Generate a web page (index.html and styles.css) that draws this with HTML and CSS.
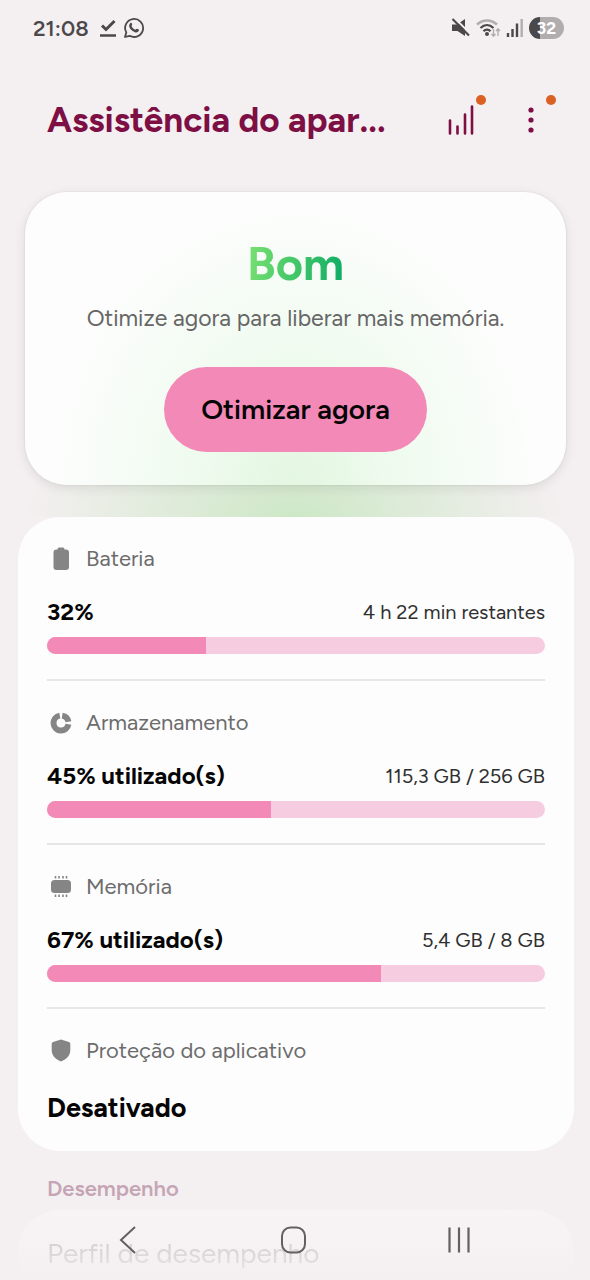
FILE: index.html
```html
<!DOCTYPE html>
<html lang="pt-BR">
<head>
<meta charset="utf-8">
<meta name="viewport" content="width=device-width, initial-scale=1">
<title>Assistência do aparelho</title>
<link rel="stylesheet" href="styles.css">
</head>
<body>
<div class="status">
  <div class="status-group">
    <span class="clock">21:08</span>
    <svg width="18" height="20" viewBox="0 0 18 20" fill="none" stroke="#4b484a"><path d="M3 7.500l4 4L15.500 3" stroke-width="3"/><path d="M1 17.500h16" stroke-width="2.500"/></svg>
    <svg width="22" height="22" viewBox="0 0 22 22" fill="none" stroke="#4b484a"><path d="M2 20l1.300-4.600A9 9 0 1 1 6.700 18.800z" stroke-width="1.800" stroke-linejoin="round"/><path d="M7.200 6.200c.8-.8 1.500-.3 1.900.7.400 1-.6 1.600-.6 2.100.4 1.400 2.300 3.200 3.700 3.700.6.100 1.200-1.200 1.900-1 .8.300 2 .9 1.900 1.400-.3 2.100-2.300 2.700-4.100 2.100-3.300-1.200-5-3.300-5.700-5.600-.2-1.200.2-2.700 1-3.400z" fill="#4b484a" stroke="none"/></svg>
  </div>
  <div class="status-group status-right">
    <svg width="20" height="20" viewBox="0 0 20 20"><path d="M1 6.500h5L14 1v17l-7.500-5H1z" fill="#4b484a"/><path d="M3.500 0L20 16.500" stroke="#f4eff1" stroke-width="2"/><path d="M1.500 1L18 17.500" stroke="#4b484a" stroke-width="2.200"/></svg>
    <svg width="25" height="20" viewBox="0 0 25 20" fill="none"><path d="M1 6.500C7 1 15 1 21 6.500" stroke="#b1adaf" stroke-width="2.500"/><path d="M4.500 10c4-3.800 9-3.800 13 0M7.500 13.200c2-2 5-2 7 0" stroke="#4b484a" stroke-width="2.300"/><circle cx="11" cy="16" r="2" fill="#4b484a"/><path d="M17.500 11v7m-2-2l2 2.200 2-2.200M22 18v-7m-2 2l2-2.200 2 2.200" stroke="#b1adaf" stroke-width="1.400"/></svg>
    <svg width="18" height="20" viewBox="0 0 18 20" stroke-width="2.400"><path d="M2 19v-4M6.500 19v-8M11 19V5.500" stroke="#4b484a"/><path d="M15.700 19V1" stroke="#b1adaf"/></svg>
    <span class="charge">32</span>
  </div>
</div>

<header class="header">
  <h1 class="title">Assistência do apar...</h1>
  <button class="icon-button" aria-label="Gráfico">
    <svg width="30" height="34" viewBox="0 0 30 34" stroke="#7d0f45" stroke-width="2.600" stroke-linecap="round"><path d="M4 17.500v13M11.500 23.500v7M19 11.500v19M26 3.500v27"/></svg>
    <span class="dot"></span>
  </button>
  <button class="icon-button" aria-label="Mais opções">
    <svg width="30" height="34" viewBox="0 0 30 34" fill="#7d0f45"><circle cx="15" cy="7" r="2.600"/><circle cx="15" cy="17" r="2.600"/><circle cx="15" cy="27" r="2.600"/></svg>
    <span class="dot"></span>
  </button>
</header>

<main>
  <div class="hero">
    <section class="summary">
      <h2 class="grade">Bom</h2>
      <p class="hint">Otimize agora para liberar mais memória.</p>
      <button class="optimize">Otimizar agora</button>
    </section>
  </div>

  <section class="metrics">
    <article class="metric">
      <h3 class="label"><svg width="28" height="24" viewBox="0 0 28 24" fill="#858585"><path d="M10.500 2.500q0-2 1.500-2h4q1.500 0 1.500 2h1.500q3 0 3 3V20q0 3-3 3h-9.500q-3 0-3-3V5.500q0-3 3-3z"/></svg>Bateria</h3>
      <div class="row"><strong class="value">32%</strong><span class="detail">4 h 22 min restantes</span></div>
      <div class="bar" role="progressbar" aria-label="Bateria" aria-valuenow="32"><div class="fill" style="width:32%"></div></div>
    </article>
    <article class="metric">
      <h3 class="label"><svg width="28" height="24" viewBox="0 0 28 24" fill="none" stroke="#858585" stroke-width="6"><path d="M12.800 4.600A7.500 7.500 0 1 0 21.400 13.200"/><path d="M15.200 4.600A7.500 7.500 0 0 1 21.400 10.800"/></svg>Armazenamento</h3>
      <div class="row"><strong class="value">45% utilizado(s)</strong><span class="detail">115,3 GB / 256 GB</span></div>
      <div class="bar" role="progressbar" aria-label="Armazenamento" aria-valuenow="45"><div class="fill" style="width:45%"></div></div>
    </article>
    <article class="metric">
      <h3 class="label"><svg width="28" height="24" viewBox="0 0 28 24"><rect x="4" y="5" width="20" height="13" rx="3.500" fill="#858585"/><path d="M8.500 1v2.500M12 1v2.500M16 1v2.500M19.500 1v2.500M8.500 19.500V22M12 19.500V22M16 19.500V22M19.500 19.500V22" stroke="#858585" stroke-width="1.600"/></svg>Memória</h3>
      <div class="row"><strong class="value">67% utilizado(s)</strong><span class="detail">5,4 GB / 8 GB</span></div>
      <div class="bar" role="progressbar" aria-label="Memória" aria-valuenow="67"><div class="fill" style="width:67%"></div></div>
    </article>
    <article class="metric">
      <h3 class="label"><svg width="28" height="24" viewBox="0 0 28 24" fill="#858585"><path d="M14 0.500l8 2.600q1.300.4 1.300 1.700V11c0 5.500-3.600 9.300-9.300 11.500C8.300 20.300 4.700 16.500 4.700 11V4.800q0-1.300 1.300-1.700z"/></svg>Proteção do aplicativo</h3>
      <strong class="state">Desativado</strong>
    </article>
  </section>

  <h2 class="group-title">Desempenho</h2>
  <section class="group"><a class="group-link" href="#perfil">Perfil de desempenho</a></section>
</main>

<nav class="navbar">
  <button class="nav-button" aria-label="Voltar"><svg width="30" height="32" viewBox="0 0 30 32" fill="none" stroke="#626062" stroke-width="2"><path d="M22 3L8 16l14 13"/></svg></button>
  <button class="nav-button" aria-label="Início"><svg width="30" height="32" viewBox="0 0 30 32" fill="none" stroke="#626062" stroke-width="2"><rect x="3" y="3.500" width="23" height="25" rx="8.500"/></svg></button>
  <button class="nav-button" aria-label="Recentes"><svg width="30" height="32" viewBox="0 0 30 32" fill="none" stroke="#626062" stroke-width="2.200"><path d="M5.500 3.500v25M15 3.500v25M24.500 3.500v25"/></svg></button>
</nav>
</body>
</html>
```
FILE: styles.css
```css
* { box-sizing: border-box; }
body {
  margin: 0;
  background: #f4eff1;
  color: #050505;
  font-family: Figtree, Lato, "Open Sans", sans-serif;
}
h1, h2, h3, p { margin: 0; }
svg { display: block; flex: none; }
button {
  border: 0;
  padding: 0;
  background: none;
  font-family: inherit;
  color: inherit;
}

.status {
  display: flex;
  justify-content: space-between;
  height: 56px;
  padding: 0 26px 0 33px;
}
.status-group { display: flex; align-items: center; gap: 6px; }
.status-right { gap: 5px; }
.clock {
  margin-right: 4px;
  color: #4b484a;
  font-size: 22px;
  font-weight: 600;
}
.charge {
  width: 35px;
  border-radius: 11px;
  background: linear-gradient(90deg, #4b484a 32%, #b1adaf 32%);
  color: #fff;
  font-size: 17px;
  font-weight: 700;
  line-height: 22px;
  text-align: center;
}

.header {
  display: flex;
  align-items: center;
  height: 136px;
  padding: 0 44px 8px 47px;
}
.title {
  flex: 1;
  color: #7d0f45;
  font-size: 35px;
  font-weight: 700;
  line-height: 48px;
}
.icon-button { position: relative; margin-left: 40px; }
.dot {
  position: absolute;
  top: -8px;
  right: -10px;
  width: 10px;
  height: 10px;
  border-radius: 50%;
  background: #db6024;
}

.hero {
  padding: 0 24px 32px 25px;
  background: radial-gradient(ellipse 270px 130px at 50% 100%, #cde8c6, #f4eff100);
}
.summary {
  display: flex;
  flex-direction: column;
  align-items: center;
  padding: 42px 24px 33px;
  border-radius: 42px;
  background: radial-gradient(ellipse 250px 290px at 50% 100%, #e3f7e1, #f0fbf0 45%, #fdfdfd);
  box-shadow: 0 3px 12px #00000018, 0 0 2px #0000001c;
}
.grade {
  background: linear-gradient(100deg, #7de274, #42c768 50%, #0baa66);
  background-clip: text;
  color: transparent;
  font-size: 47px;
  font-weight: 700;
  line-height: 60px;
}
.hint {
  margin: 8px 0 33px;
  color: #666;
  font-size: 23px;
  line-height: 32px;
}
.optimize {
  padding: 0 37px;
  border-radius: 43px;
  background: #f289b7;
  font-size: 28px;
  font-weight: 600;
  line-height: 85px;
}

.metrics {
  margin: 0 16px 0 18px;
  padding: 0 29px;
  border-radius: 42px;
  background: #fdfdfd;
}
.metric { padding: 26px 0 25px; border-bottom: 2px solid #e7e5e6; }
.metric:last-child { padding-bottom: 27px; border-bottom: 0; }
.label {
  display: flex;
  align-items: center;
  gap: 11px;
  color: #6c6c6c;
  font-size: 22px;
  font-weight: 400;
  line-height: 32px;
}
.row {
  display: flex;
  align-items: center;
  justify-content: space-between;
  margin: 21px 0 9px;
  line-height: 32px;
}
.value { font-size: 24px; }
.detail { color: #303030; font-size: 20px; }
.bar {
  height: 17px;
  overflow: hidden;
  border-radius: 9px;
  background: #f6cde0;
}
.fill { height: 100%; background: #f289b7; }
.state {
  display: block;
  margin-top: 25px;
  font-size: 27px;
  line-height: 32px;
}

.group-title {
  margin: 22px 47px 5px;
  color: #c5a5b5;
  font-size: 22px;
  font-weight: 600;
  line-height: 32px;
}
.group {
  margin: 0 16px 0 18px;
  padding: 23px 29px 7px;
  border-radius: 42px 42px 0 0;
  background: linear-gradient(#f8f4f6, #f4eff1);
}
.group-link {
  display: block;
  background: linear-gradient(#cfcacc, #e8e3e5);
  background-clip: text;
  color: transparent;
  font-size: 28px;
  line-height: 40px;
  text-decoration: none;
}

.navbar {
  position: fixed;
  inset: auto 0 0;
  display: flex;
  justify-content: space-between;
  padding: 24px 116px 24px 113px;
}
.nav-button { flex: none; }
```
